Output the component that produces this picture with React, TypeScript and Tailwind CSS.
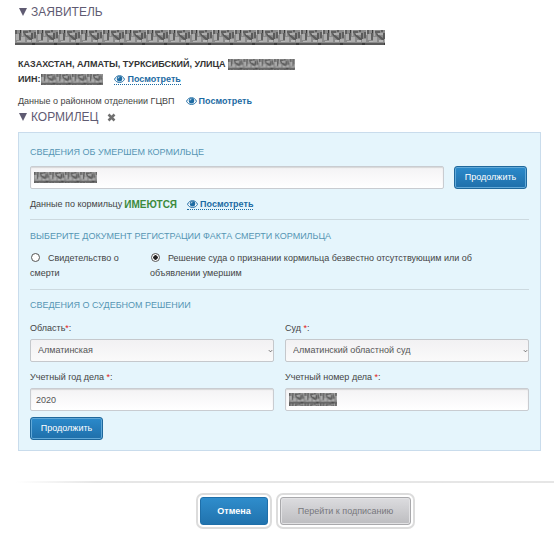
import { useId, useState } from "react";
import type { ReactNode } from "react";

// Noisy bar drawn over personal data
function Redacted({ className, scale = 1 }: { className: string; scale?: number }) {
  const id = useId();
  return (
    <svg className={className} role="img" aria-label="Скрыто">
      <defs>
        <pattern id={id} width="22" height="15" patternUnits="userSpaceOnUse" patternTransform={`scale(${scale})`}>
          <rect width="22" height="15" fill="#8c8c8c" />
          <path d="M0 0h2v4H0zM8 1h5v2H8zM14 0h2v2h-2zM4 3h2v7H4zM19 2h2v6h-2z" fill="#606060" />
          <path d="M8 2l8 6v3l-6-5zM16 3h2v7h-2zM0 13h22v2H0z" fill="#5a5a5a" />
          <path d="M1 4h3v6H1zM6 7h4v5H6zM11 3h5v2h-5zM17 9h4v3h-4zM7 0h1v6H7z" fill="#adadad" />
          <path d="M2 11h4v1H2zM12 10h4v2h-4zM21 0h1v5h-1z" fill="#b8b8b8" />
          <path d="M5 0h1v3H5zM17 13h3v2h-3z" fill="#3c3c3c" />
        </pattern>
      </defs>
      <rect width="100%" height="100%" fill={`url(#${id})`} />
    </svg>
  );
}

function EyeIcon() {
  return (
    <svg viewBox="0 0 22 16" className="h-2 w-[11px] shrink-0" aria-hidden="true">
      <path d="M1 8.500C5-1 17-1 21 8.500C17 17 5 17 1 8.500z" fill="#fff" stroke="#1d6ba3" strokeWidth="2" />
      <circle cx="11" cy="7.500" r="5.500" fill="#1d6ba3" />
      <path d="M8 7a3 3 0 0 1 3-3" fill="none" stroke="#fff" strokeWidth="1.500" />
    </svg>
  );
}

function ViewLink({ underline = false }: { underline?: boolean }) {
  return (
    <a
      href="#view"
      className={`inline-flex items-center gap-[2px] font-bold leading-[10px] text-[#1d6ba3] ${
        underline ? "border-b border-dotted border-[#1d6ba3]" : "border-b border-transparent"
      }`}
    >
      <EyeIcon />
      Посмотреть
    </a>
  );
}

function SectionTitle({ children, action }: { children: ReactNode; action?: ReactNode }) {
  return (
    <h2 className="flex h-4 items-center gap-1 text-[12px] text-[#5f5b72]">
      <svg viewBox="0 0 8 8" className="ml-px h-2 w-2" aria-hidden="true">
        <path d="M0 0h8L4 8z" fill="#5f5b72" />
      </svg>
      {children}
      {action}
    </h2>
  );
}

function GroupTitle({ children }: { children: ReactNode }) {
  return <h3 className="text-[9px] leading-4 text-[#5596b4]">{children}</h3>;
}

function ContinueButton() {
  return (
    <button
      type="button"
      className="h-[23px] w-[73px] shrink-0 rounded-[3px] border border-[#1f689c] bg-linear-to-b from-[#2b8acb] to-[#1f6faa] text-[9px] text-white inset-ring inset-ring-[#62a9d8]"
    >
      Продолжить
    </button>
  );
}

function Field({ id, label, children }: { id: string; label: ReactNode; children: ReactNode }) {
  return (
    <div className="min-w-0">
      <label htmlFor={id} className="block h-[19px] leading-4">
        {label}
        <span className="text-[#e02020]">*</span>:
      </label>
      <div className="relative">{children}</div>
    </div>
  );
}

const inputClass =
  "block h-[23px] w-full rounded-[2px] border border-[#c9ccd1] bg-linear-to-b from-[#f4f3f5] to-white px-[5px] text-[9px] text-[#555] shadow-[inset_0_1px_1px_#d8d8d8]";

function Select({ id, options }: { id: string; options: string[] }) {
  return (
    <>
      <select
        id={id}
        className="block h-[23px] w-full appearance-none rounded-[2px] border border-[#c5c8cc] bg-linear-to-b from-[#f2f1f3] to-[#fafafa] px-[7px] text-[9px] text-[#555]"
      >
        {options.map((o) => (
          <option key={o}>{o}</option>
        ))}
      </select>
      <svg viewBox="0 0 6 4" className="pointer-events-none absolute top-[10px] right-[1px] h-1 w-[5px]" aria-hidden="true">
        <path d="M1 1l2 2 2-2" fill="none" stroke="#555" />
      </svg>
    </>
  );
}

const DOCUMENTS = [
  { id: "certificate", text: "Свидетельство о смерти" },
  { id: "decision", text: "Решение суда о признании кормильца безвестно отсутствующим или об объявлении умершим" },
];

export default function App() {
  const [doc, setDoc] = useState("decision");

  return (
    <main className="bg-white pt-1 pb-2 font-['Liberation_Sans',Arial,sans-serif] text-[9px] leading-[15px] text-[#444]">
      <div className="pr-[19px] pl-[18px]">
        <SectionTitle>ЗАЯВИТЕЛЬ</SectionTitle>
        <Redacted className="mt-[10px] -ml-[3px] block h-[15px] w-[370px]" />

        <div className="mt-3 font-bold text-[#333]">
          <p className="flex items-center gap-[2px]">
            КАЗАХСТАН, АЛМАТЫ, ТУРКСИБСКИЙ, УЛИЦА
            <Redacted className="h-[11px] w-[67px]" scale={0.7} />
          </p>
          <p className="flex items-center">
            ИИН:
            <Redacted className="mr-[11px] ml-px h-[11px] w-[62px]" scale={0.7} />
            <ViewLink underline />
          </p>
        </div>
        <p className="mt-[7px] flex items-center gap-[11px]">
          Данные о районном отделении ГЦВП
          <ViewLink />
        </p>

        <SectionTitle
          action={
            <button type="button" aria-label="Удалить" className="ml-[5px]">
              <svg viewBox="0 0 9 9" className="size-[9px]" aria-hidden="true">
                <path d="M1.500 1.500l6 6M7.500 1.500l-6 6" stroke="#707070" strokeWidth="2.500" />
              </svg>
            </button>
          }
        >
          КОРМИЛЕЦ
        </SectionTitle>

        <section className="mt-[7px] border border-[#c9dcec] bg-[#e5f5fc] px-[11px] pt-[11px] pb-[10px]">
          <GroupTitle>СВЕДЕНИЯ ОБ УМЕРШЕМ КОРМИЛЬЦЕ</GroupTitle>
          <div className="mt-[6px] flex gap-[10px] pr-[2px]">
            <div className="relative min-w-0 flex-1">
              <input type="text" aria-label="ИИН кормильца" className={inputClass} />
              <Redacted className="pointer-events-none absolute top-[6px] left-1 h-[11px] w-[63px]" scale={0.7} />
            </div>
            <ContinueButton />
          </div>
          <div className="mt-2 flex items-center">
            Данные по кормильцу
            <span className="mr-[10px] ml-[2px] text-[10px] font-bold text-[#3c8a3c]">ИМЕЮТСЯ</span>
            <ViewLink underline />
          </div>

          <hr className="mt-[7px] mb-2 border-[#ccd9df]" />

          <GroupTitle>ВЫБЕРИТЕ ДОКУМЕНТ РЕГИСТРАЦИИ ФАКТА СМЕРТИ КОРМИЛЬЦА</GroupTitle>
          <div className="mt-[7px] grid grid-cols-[96px_1fr] gap-6 pr-8">
            {DOCUMENTS.map(({ id, text }) => (
              <label key={id}>
                <input
                  type="radio"
                  name="doc"
                  checked={doc === id}
                  onChange={() => setDoc(id)}
                  className="mr-2 ml-px size-[9px] appearance-none rounded-full border border-[#555] bg-white align-[-1px] checked:bg-[radial-gradient(#222_40%,white_50%)]"
                />
                {text}
              </label>
            ))}
          </div>

          <hr className="mt-2 mb-[7px] border-[#ccd9df]" />

          <GroupTitle>СВЕДЕНИЯ О СУДЕБНОМ РЕШЕНИИ</GroupTitle>
          <div className="mt-[7px] grid grid-cols-2 gap-x-[11px] gap-y-[7px]">
            <Field id="region" label="Область">
              <Select id="region" options={["Алматинская"]} />
            </Field>
            <Field id="court" label="Суд ">
              <Select id="court" options={["Алматинский областной суд"]} />
            </Field>
            <Field id="year" label="Учетный год дела ">
              <input id="year" type="text" defaultValue="2020" className={inputClass} />
            </Field>
            <Field id="number" label="Учетный номер дела ">
              <input id="number" type="text" className={inputClass} />
              <Redacted className="pointer-events-none absolute top-[5px] left-1 h-[13px] w-[48px]" scale={0.7} />
            </Field>
          </div>
          <div className="mt-[6px] flex">
            <ContinueButton />
          </div>
        </section>
      </div>

      <div className="mt-[30px] mr-[6px] ml-4 h-[2px] bg-linear-to-r from-white via-[#e6e6e6] via-15% to-[#e6e6e6]" />

      <div className="mt-[10px] flex justify-center gap-1 pl-[51px]">
        <div className="rounded-[7px] border-2 border-[#dcdcdc] p-[2px]">
          <button
            type="button"
            className="block h-7 w-[68px] rounded-[3px] border border-[#1f6fa9] bg-linear-to-b from-[#2f8dcc] to-[#2173ae] text-[9px] font-bold text-white"
          >
            Отмена
          </button>
        </div>
        <div className="rounded-[7px] border-2 border-[#dcdcdc] p-[2px]">
          <button
            type="button"
            className="block h-7 w-[131px] rounded-[3px] border border-[#a9a9ac] bg-linear-to-b from-[#dcdcdf] to-[#bdbdc0] text-[9px] text-[#77777c] inset-ring inset-ring-[#e2e2e4]"
          >
            Перейти к подписанию
          </button>
        </div>
      </div>
    </main>
  );
}
